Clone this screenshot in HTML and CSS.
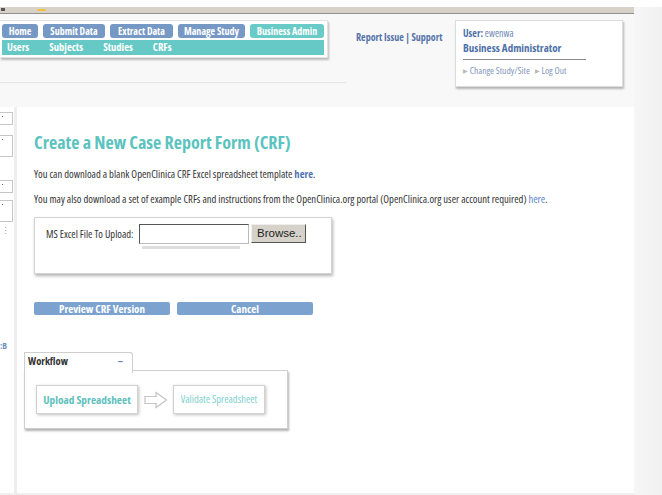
FILE: index.html
```html
<!DOCTYPE html>
<html>
<head>
<meta charset="utf-8">
<link rel="stylesheet" href="styles.css">
</head>
<body>
<div class="page">
  <div class="main">
    <div class="topstrip"></div>
    <div class="chrome"><span class="favicon"></span><span class="tabmark"></span></div>
    <div class="header">
      <div class="navcol">
        <div class="navbox">
          <div class="tabs">
            <span class="tab">Home</span>
            <span class="tab">Submit Data</span>
            <span class="tab">Extract Data</span>
            <span class="tab">Manage Study</span>
            <span class="tab tab-active">Business Admin</span>
          </div>
          <div class="subnav">
            <span>Users</span><span>Subjects</span><span>Studies</span><span>CRFs</span>
          </div>
        </div>
        <div class="navrule"></div>
      </div>
      <div class="toplinks"><a>Report Issue</a> | <a>Support</a></div>
      <div class="userbox">
        <div class="user"><b>User:</b> ewenwa</div>
        <div class="role">Business Administrator</div>
        <div class="userrule"></div>
        <div class="userlinks"><span class="arr">&#9654;</span> Change Study/Site <span class="arr arr2">&#9654;</span> Log Out</div>
      </div>
    </div>
    <div class="content">
      <div class="sidebar">
        <span class="brk b1"></span>
        <span class="brk b2"></span>
        <span class="brk b3"></span>
        <span class="brk b4"></span>
        <span class="dots">&#8942;</span>
        <span class="sidetext">:B</span>
      </div>
      <div class="sep"></div>
      <div class="body">
        <h1 class="title">Create a New Case Report Form (CRF)</h1>
        <p class="txt">You can download a blank OpenClinica CRF Excel spreadsheet template <a class="lnk">here</a>.</p>
        <p class="txt">You may also download a set of example CRFs and instructions from the OpenClinica.org portal (OpenClinica.org user account required) <a class="lnk lnk-light">here</a>.</p>
        <div class="uploadbox">
          <span class="lbl">MS Excel File To Upload:</span>
          <span class="fileinput"></span>
          <span class="browse">Browse..</span>
        </div>
        <div class="actions">
          <span class="btn">Preview CRF Version</span>
          <span class="btn">Cancel</span>
        </div>
        <div class="workflow">
          <div class="wftab"><span>Workflow</span><span class="minus">&ndash;</span></div>
          <div class="wfbox">
            <span class="step step-on">Upload Spreadsheet</span>
            <svg class="arrow" width="24" height="18" viewBox="0 0 24 18"><path d="M1 5.5H12V1.5L22.5 9L12 16.5V12.5H1Z" fill="#fff" stroke="#c4c4c4" stroke-width="1.2"/></svg>
            <span class="step step-off">Validate Spreadsheet</span>
          </div>
        </div>
      </div>
    </div>
    <div class="bottom"></div>
  </div>
  <div class="gutter"></div>
</div>
</body>
</html>
```
FILE: styles.css
```css
* { box-sizing: border-box; }
html, body { margin: 0; padding: 0; }
body {
  font-family: "Open Sans", "Noto Sans", "Liberation Sans", sans-serif;
  font-stretch: 75%;
  color: #333;
  background: #fff;
  width: 662px;
  height: 495px;
  overflow: hidden;
}
.page { display: flex; height: 495px; }
.main { width: 634px; display: flex; flex-direction: column; }
.gutter { width: 28px; background: linear-gradient(90deg, #f6f6f6, #f1f1f1); margin-top: 7px; }

.topstrip { height: 7px; background: #fefefe; }
.chrome {
  height: 7px;
  background: #d7d1c8;
  border-bottom: 1px solid #8f8f8f;
  display: flex; align-items: flex-start;
}
.favicon { width: 4px; height: 3px; background: #555; margin: 1px 0 0 1px; }
.tabmark { width: 9px; height: 2px; background: #f0c040; margin: 2px 0 0 32px; border-radius: 1px; }

.header {
  height: 93px;
  background: #f8f8f8;
  display: flex;
  align-items: flex-start;
}
.navcol { width: 346px; padding-top: 6px; }
.navbox {
  width: 328px;
  height: 38px;
  background: #fff;
  border: 1px solid #e2e2e2;
  border-left: none;
  box-shadow: 1px 2px 2px rgba(0,0,0,0.25);
  padding: 3px 0 0 2px;
}
.tabs { display: flex; gap: 5px; }
.tab {
  height: 14px;
  line-height: 14px;
  background: #7698c4;
  color: #fff;
  font-weight: bold;
  font-size: 10px;
  border-radius: 3px;
  text-align: center;
  white-space: nowrap;
}
.tab:nth-child(1) { width: 36px; }
.tab:nth-child(2) { width: 62px; }
.tab:nth-child(3) { width: 63px; }
.tab:nth-child(4) { width: 67px; }
.tab-active { width: 74px; background: #68cbc8; }
.subnav {
  margin-top: 2px;
  width: 322px;
  height: 15px;
  background: #66c9c5;
  display: flex;
  gap: 20px;
  padding-left: 5px;
  font-size: 10.5px;
  font-weight: bold;
  color: #fff;
  line-height: 15px;
}
.navrule { margin-top: 24px; height: 1px; background: #e4e4e4; width: 346px; }

.toplinks {
  margin: 16px 0 0 10px;
  font-size: 10px;
  font-weight: bold;
  color: #5573a8;
  width: 99px;
  white-space: nowrap;
}
.userbox {
  margin-top: 6px;
  width: 168px;
  height: 67px;
  background: #fff;
  border: 1px solid #dcdcdc;
  box-shadow: 1px 2px 2px rgba(0,0,0,0.28);
  padding: 6px 0 0 7px;
  font-size: 10px;
}
.user { color: #6d86b4; line-height: 13px; }
.user b { color: #4d6fa7; }
.role { color: #4d6fa7; font-weight: bold; line-height: 15px; font-size: 11px; }
.userrule { width: 123px; height: 1px; background: #8a8a8a; margin: 4px 0 4px 0; }
.userlinks { color: #7f95bb; font-size: 9.5px; line-height: 13px; }
.arr { color: #b8b8b8; font-size: 6px; vertical-align: 1px; }
.arr2 { margin-left: 3px; }

.content { flex: 1; display: flex; background: #fff; }
.sidebar { width: 14px; position: relative; }
.brk {
  position: absolute; left: 0; width: 13px;
  border: 1px solid #c6c6c6; border-left: none;
}
.brk::before { content: ""; position: absolute; left: 2px; top: 3px; width: 1px; height: 1px; background: #666; }
.b1 { top: 5px; height: 13px; }
.b2 { top: 28px; height: 22px; }
.b3 { top: 73px; height: 13px; }
.b4 { top: 93px; height: 22px; }
.dots { position: absolute; left: 1px; top: 117px; color: #7ab; font-size: 9px; }
.sidetext { position: absolute; left: 0; top: 232px; color: #6a8fc0; font-size: 9px; font-weight: bold; }
.sep { width: 3px; background: #eeeeee; }
.body { padding: 24px 0 0 17px; flex: 1; }

.title {
  margin: 0;
  font-size: 18px;
  font-weight: bold;
  color: #5cc3bf;
  line-height: 22px;
}
.txt { margin: 0; font-size: 10.6px; color: #333; line-height: 12px; white-space: nowrap; }
.title + .txt { margin-top: 15px; }
.txt + .txt { margin-top: 13px; }
.lnk { color: #4f72b4; font-weight: bold; }
.lnk-light { font-weight: normal; color: #5a86c8; }

.uploadbox {
  margin-top: 12px;
  width: 298px;
  height: 57px;
  border: 1px solid #d4d4d4;
  box-shadow: 1px 2px 3px rgba(0,0,0,0.3);
  display: flex;
  align-items: flex-start;
  padding: 6px 0 0 11px;
  position: relative;
}
.lbl { font-size: 10.5px; color: #333; margin-top: 3px; width: 93px; white-space: nowrap; }
.fileinput {
  width: 110px; height: 20px;
  border: 1px solid #bcbcbc;
  border-top-color: #555; border-left-color: #555;
  background: #fff;
  position: relative;
}
.fileinput::after {
  content: ""; position: absolute; left: 2px; top: 21px; width: 98px; height: 3px; background: #dedede;
}
.browse {
  margin-left: 2px;
  width: 55px; height: 19px;
  background: #d6d2ca;
  border: 1px solid #eee;
  border-right-color: #555; border-bottom-color: #555;
  font-family: "Liberation Sans", sans-serif;
  font-stretch: normal;
  font-size: 11.5px;
  line-height: 17px;
  padding-left: 5px;
  color: #222;
}

.actions { margin-top: 28px; display: flex; gap: 7px; }
.btn {
  width: 136px; height: 13px;
  background: #7ca3cf;
  border-radius: 2px;
  color: #fff;
  font-weight: bold;
  font-size: 11px;
  line-height: 13px;
  text-align: center;
}

.workflow { margin: 37px 0 0 -10px; width: 264px; }
.wftab {
  width: 109px; height: 21px;
  border: 1px solid #cfcfcf;
  border-bottom: none;
  border-radius: 0 3px 0 0;
  background: #fff;
  display: flex; justify-content: space-between;
  padding: 1px 9px 0 3px;
  font-size: 10.5px; font-weight: bold; color: #333;
  position: relative; z-index: 1;
}
.minus { color: #6b86b6; }
.wfbox {
  margin-top: -3px;
  height: 59px;
  border: 1px solid #cfcfcf;
  box-shadow: 1px 2px 2px rgba(0,0,0,0.3);
  display: flex; align-items: flex-start;
  padding: 14px 0 0 11px;
}
.step {
  height: 29px;
  border: 1px solid #d2d2d2;
  box-shadow: 1px 1px 3px rgba(0,0,0,0.25);
  line-height: 27px;
  text-align: center;
  white-space: nowrap;
}
.step-on { width: 102px; font-weight: bold; color: #5ec0bc; font-size: 11.3px; }
.step-off { width: 92px; color: #7dd0cd; font-size: 10.5px; }
.arrow { margin: 6px 5px 0 6px; }
.bottom { height: 2px; background: #efefef; }
```
